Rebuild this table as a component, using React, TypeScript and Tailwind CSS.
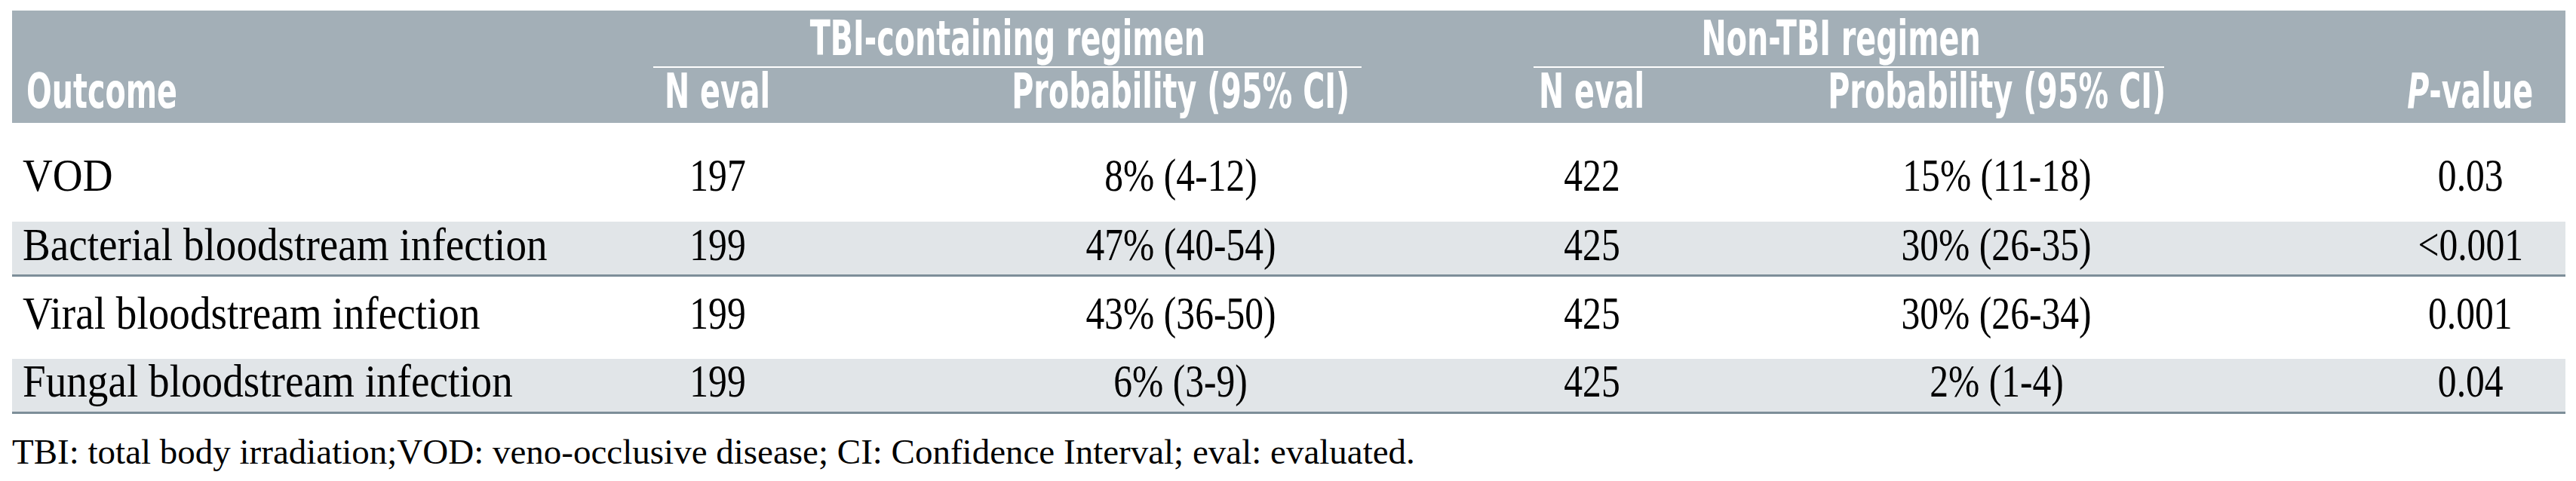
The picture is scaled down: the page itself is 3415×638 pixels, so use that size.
import React from "react";

const rows = [
  { o: "VOD", n1: "197", p1: "8% (4-12)", n2: "422", p2: "15% (11-18)", pv: "0.03", cls: "h-[131px] pt-[44px] bg-white" },
  { o: "Bacterial bloodstream infection", n1: "199", p1: "47% (40-54)", n2: "425", p2: "30% (26-35)", pv: "<0.001", cls: "h-[73px] pt-[5px] bg-[#e1e5e8] border-b-[3px] border-[#7d8e99]" },
  { o: "Viral bloodstream infection", n1: "199", p1: "43% (36-50)", n2: "425", p2: "30% (26-34)", pv: "0.001", cls: "h-[109px] pt-[23px] bg-white" },
  { o: "Fungal bloodstream infection", n1: "199", p1: "6% (3-9)", n2: "425", p2: "2% (1-4)", pv: "0.04", cls: "h-[73px] pt-[4px] bg-[#e1e5e8] border-b-[3px] border-[#7d8e99]" },
];

const head = "font-['DejaVu_Sans','Liberation_Sans',sans-serif] font-bold text-white text-[64px] leading-[56px] whitespace-nowrap";
const body = "font-['Liberation_Serif',serif] text-black text-[62px] leading-[50px] whitespace-nowrap";
const hc = "inline-block shrink-0 scale-x-[0.62] origin-center";
const nc = "inline-block shrink-0 scale-x-[0.8] origin-center";

export default function App() {
  return (
    <div className="w-[3415px] h-[638px] bg-white pt-[14px] pl-[16px]">
      <div className="w-[3385px]">
        <div className={"bg-[#a3afb7] " + head}>
          <div className="flex h-[76px]">
            <div className="w-[850px]" />
            <div className="w-[939px] h-full border-b-2 border-white flex justify-center items-start pt-[9px]">
              <span className={hc}>TBI-containing regimen</span>
            </div>
            <div className="w-[228px]" />
            <div className="w-[836px] h-full border-b-2 border-white flex justify-center items-start pt-[9px] pr-[20px]">
              <span className={hc}>Non-TBI regimen</span>
            </div>
            <div className="w-[532px]" />
          </div>
          <div className="flex h-[73px] pt-[3px]">
            <div className="w-[850px] pl-[19px]">
              <span className="inline-block scale-x-[0.62] origin-left">Outcome</span>
            </div>
            <div className="w-[170px] flex justify-center items-start"><span className={hc}>N eval</span></div>
            <div className="w-[769px] pl-[290px] flex justify-center items-start"><span className={hc}>Probability (95% CI)</span></div>
            <div className="w-[382px] pl-[228px] flex justify-center items-start"><span className={hc}>N eval</span></div>
            <div className="w-[682px] pl-[238px] flex justify-center items-start"><span className={hc}>Probability (95% CI)</span></div>
            <div className="w-[532px] pl-[280px] flex justify-center items-start">
              <span className={hc}><span className="italic">P</span>-value</span>
            </div>
          </div>
        </div>
        {rows.map((r) => (
          <div key={r.o} className={"flex " + body + " " + r.cls}>
            <div className="w-[850px] pl-[14px]">
              <span className="inline-block scale-x-[0.89] origin-left">{r.o}</span>
            </div>
            <div className="w-[170px] flex justify-center items-start"><span className={nc}>{r.n1}</span></div>
            <div className="w-[769px] pl-[290px] flex justify-center items-start"><span className={nc}>{r.p1}</span></div>
            <div className="w-[382px] pl-[228px] flex justify-center items-start"><span className={nc}>{r.n2}</span></div>
            <div className="w-[682px] pl-[238px] flex justify-center items-start"><span className={nc}>{r.p2}</span></div>
            <div className="w-[532px] pl-[280px] flex justify-center items-start"><span className={nc}>{r.pv}</span></div>
          </div>
        ))}
        <div className="pt-[27px] font-['Liberation_Serif',serif] text-black text-[47px] leading-[46px] whitespace-nowrap">
          TBI: total body irradiation;VOD: veno-occlusive disease; CI: Confidence Interval; eval: evaluated.
        </div>
      </div>
    </div>
  );
}
